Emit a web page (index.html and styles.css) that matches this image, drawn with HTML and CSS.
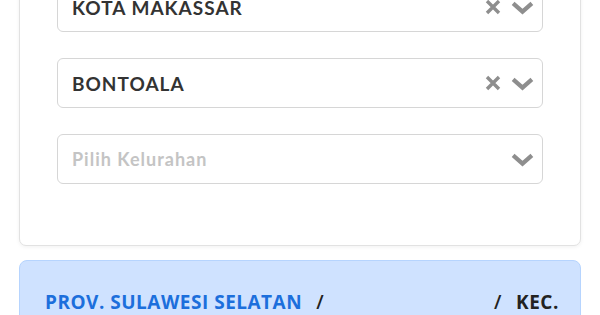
FILE: index.html
```html
<!DOCTYPE html>
<html>
<head>
<meta charset="utf-8">
<link rel="stylesheet" href="styles.css">
</head>
<body>
<div class="page">
  <div class="card">
    <div class="select">
      <span class="value">KOTA MAKASSAR</span>
      <span class="icons">
        <svg class="clear" viewBox="0 0 16 16"><path d="M2 2 L14 14 M14 2 L2 14"/></svg>
        <svg class="chev" viewBox="0 0 24 16"><path d="M3 4 L12 12 L21 4"/></svg>
      </span>
    </div>
    <div class="select">
      <span class="value">BONTOALA</span>
      <span class="icons">
        <svg class="clear" viewBox="0 0 16 16"><path d="M2 2 L14 14 M14 2 L2 14"/></svg>
        <svg class="chev" viewBox="0 0 24 16"><path d="M3 4 L12 12 L21 4"/></svg>
      </span>
    </div>
    <div class="select">
      <span class="placeholder">Pilih Kelurahan</span>
      <span class="icons">
        <svg class="chev" viewBox="0 0 24 16"><path d="M3 4 L12 12 L21 4"/></svg>
      </span>
    </div>
  </div>
  <div class="alert">
    <span class="prov">PROV. SULAWESI SELATAN</span>
    <span class="sep">/</span>
    <span class="kota"></span>
    <span class="sep">/</span>
    <span class="kec">KEC.</span>
  </div>
</div>
</body>
</html>
```
FILE: styles.css
```css
html, body {
  margin: 0;
  padding: 0;
  background: #ffffff;
  overflow: hidden;
}
.page {
  width: 600px;
  height: 315px;
  padding: 0 19px;
  box-sizing: border-box;
  display: flex;
  flex-direction: column;
  gap: 14px;
  overflow: hidden;
}
.card {
  margin-top: -39px;
  border: 1px solid #e2e2e2;
  border-radius: 7px;
  background: #fff;
  box-shadow: 0 1px 4px rgba(0,0,0,0.06);
  padding: 20px 37px 61px 37px;
  display: flex;
  flex-direction: column;
  gap: 26px;
}
.select {
  height: 50px;
  box-sizing: border-box;
  border: 1px solid #d6d6d6;
  border-radius: 6px;
  display: flex;
  align-items: center;
  padding: 0 7px 0 14px;
}
.value {
  flex: 1;
  font-family: Lato, "DejaVu Sans", sans-serif;
  font-weight: 700;
  font-size: 19px;
  letter-spacing: 1px;
  color: #333;
}
.placeholder {
  flex: 1;
  font-family: Lato, "DejaVu Sans", sans-serif;
  font-weight: 700;
  font-size: 18px;
  letter-spacing: 1px;
  color: #c4c4c4;
}
.icons {
  display: flex;
  align-items: center;
  gap: 9px;
}
.icons svg {
  display: block;
  fill: none;
  stroke: #8e8e8e;
  stroke-linecap: butt;
}
.clear {
  width: 16px;
  height: 16px;
  stroke-width: 3.4;
}
.chev {
  width: 25px;
  height: 17px;
  stroke-width: 4;
}
.alert {
  flex-shrink: 0;
  border: 1px solid #b6d4fe;
  border-radius: 8px;
  background: #cfe2ff;
  height: 100px;
  padding: 28px 25px 0 25px;
  display: flex;
  align-items: flex-start;
  gap: 14px;
  font-family: "Open Sans", sans-serif;
  font-weight: 700;
  font-size: 19px;
  letter-spacing: 0.5px;
  white-space: nowrap;
}
.alert span { flex-shrink: 0; }
.prov { color: #1c6fdc; }
.sep { color: #222; font-weight: 600; }
.kota { width: 142px; }
.kec { color: #222; }
```
